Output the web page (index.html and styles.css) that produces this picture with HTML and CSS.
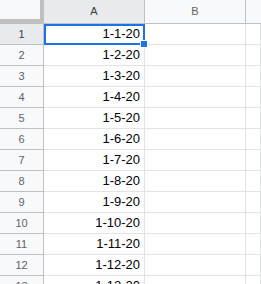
FILE: index.html
```html
<!DOCTYPE html>
<html>
<head>
	<meta charset="utf-8">
	<title>Sheet</title>
	<link rel="stylesheet" href="styles.css">
</head>
<body>
	<div class="sheet">
		<div class="corner"></div>
		<div class="colhead active">A</div>
		<div class="colhead">B</div>
		<div class="colhead last"></div>

		<div class="rowhead active">1</div><div class="cell selected">1-1-20</div><div class="cell"></div><div class="cell"></div>
		<div class="rowhead">2</div><div class="cell">1-2-20</div><div class="cell"></div><div class="cell"></div>
		<div class="rowhead">3</div><div class="cell">1-3-20</div><div class="cell"></div><div class="cell"></div>
		<div class="rowhead">4</div><div class="cell">1-4-20</div><div class="cell"></div><div class="cell"></div>
		<div class="rowhead">5</div><div class="cell">1-5-20</div><div class="cell"></div><div class="cell"></div>
		<div class="rowhead">6</div><div class="cell">1-6-20</div><div class="cell"></div><div class="cell"></div>
		<div class="rowhead">7</div><div class="cell">1-7-20</div><div class="cell"></div><div class="cell"></div>
		<div class="rowhead">8</div><div class="cell">1-8-20</div><div class="cell"></div><div class="cell"></div>
		<div class="rowhead">9</div><div class="cell">1-9-20</div><div class="cell"></div><div class="cell"></div>
		<div class="rowhead">10</div><div class="cell">1-10-20</div><div class="cell"></div><div class="cell"></div>
		<div class="rowhead">11</div><div class="cell">1-11-20</div><div class="cell"></div><div class="cell"></div>
		<div class="rowhead">12</div><div class="cell">1-12-20</div><div class="cell"></div><div class="cell"></div>
		<div class="rowhead">13</div><div class="cell">1-13-20</div><div class="cell"></div><div class="cell"></div>
	</div>
</body>
</html>
```
FILE: styles.css
```css
*{margin: 0; padding: 0; box-sizing: border-box;}
html, body{width: 261px; height: 284px; overflow: hidden; background: #fff;}
body{font-family: "Liberation Sans", Arial, sans-serif;}

.sheet{display: grid; grid-template-columns: 44px 101px 101px 1fr; grid-auto-rows: 21px; grid-template-rows: 24px;}

.corner{background: #f8f9fa; border-right: 4px solid #c0c0c0; border-bottom: 5px solid #c0c0c0;}

.colhead{background: #f8f9fa; border-right: 1px solid #c0c0c0; border-bottom: 1px solid #c0c0c0; color: #5f6368; font-size: 11px; text-align: center; line-height: 23px;}
.colhead.last{border-right: none;}

.rowhead{background: #f8f9fa; border-right: 1px solid #c0c0c0; border-bottom: 1px solid #c0c0c0; color: #5f6368; font-size: 11px; text-align: center; line-height: 20px;}

.active{background: #e8eaed; color: #3c4043;}

.cell{border-right: 1px solid #e2e3e3; border-bottom: 1px solid #e2e3e3; color: #000; font-size: 13px; text-align: right; padding-right: 4px; line-height: 20px; white-space: nowrap;}

.selected{position: relative;}
.selected::before{content: ""; position: absolute; top: 0; left: 0; right: -1px; bottom: -1px; border: 2px solid #1a73e8;}
.selected::after{content: ""; position: absolute; right: -4px; bottom: -4px; width: 6px; height: 6px; background: #1a73e8; border: 1px solid #fff; box-sizing: content-box;}
```
